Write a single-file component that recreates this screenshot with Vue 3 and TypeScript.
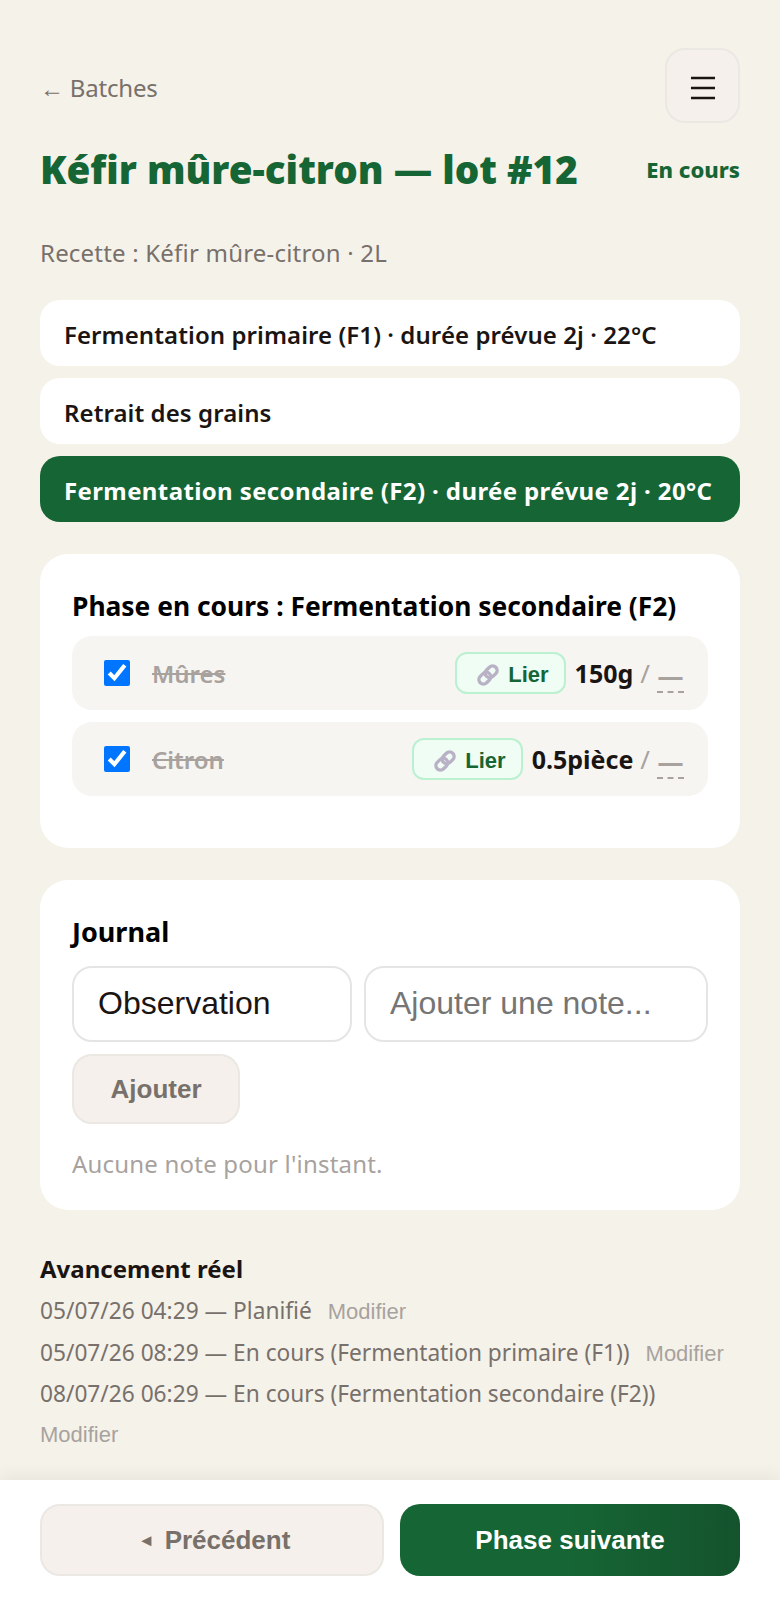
<script setup lang="ts">
import { ref } from 'vue';

const phases = [
    { label: 'Fermentation primaire (F1) · durée prévue 2j · 22°C', active: false },
    { label: 'Retrait des grains', active: false },
    { label: 'Fermentation secondaire (F2) · durée prévue 2j · 20°C', active: true },
];

const ingredients = ref([
    { name: 'Mûres', qty: '150g', done: true },
    { name: 'Citron', qty: '0.5pièce', done: true },
]);

const history = [
    '05/07/26 04:29 — Planifié',
    '05/07/26 08:29 — En cours (Fermentation primaire (F1))',
    '08/07/26 06:29 — En cours (Fermentation secondaire (F2))',
];

const note = ref('');
</script>

<template>
    <div class="page">
        <main class="content">
            <!-- Header -->
            <div class="top-row">
                <span class="back">← Batches</span>
                <button class="menu-btn" aria-label="Menu">
                    <svg class="menu-icon" viewBox="0 0 24 24" stroke="currentColor" stroke-width="2.5">
                        <path d="M0 2h24M0 12h24M0 22h24" />
                    </svg>
                </button>
            </div>
            <div class="title-row">
                <h1 class="title">Kéfir mûre-citron — lot #12</h1>
                <span class="status">En cours</span>
            </div>
            <p class="recipe">Recette : Kéfir mûre-citron · 2L</p>

            <!-- Phases -->
            <div class="phases">
                <div
                    v-for="p in phases"
                    :key="p.label"
                    class="phase"
                    :class="{ active: p.active }"
                >{{ p.label }}</div>
            </div>

            <!-- Current phase -->
            <section class="card current-card">
                <h2 class="card-title">Phase en cours : Fermentation secondaire (F2)</h2>
                <div class="ingredients">
                    <div v-for="item in ingredients" :key="item.name" class="ingredient">
                        <input v-model="item.done" type="checkbox" class="check" />
                        <span class="ing-name">{{ item.name }}</span>
                        <button class="link-btn">
                            <svg class="link-icon" viewBox="0 0 24 24" fill="none">
                                <g transform="rotate(-45 12 12)">
                                    <rect x="1" y="7.5" width="13" height="9" rx="4.5" />
                                    <rect x="10" y="7.5" width="13" height="9" rx="4.5" />
                                </g>
                            </svg>
                            Lier
                        </button>
                        <span class="qty">{{ item.qty }}</span>
                        <span class="sep">/</span>
                        <span class="actual">—</span>
                    </div>
                </div>
            </section>

            <!-- Journal -->
            <section class="card journal-card">
                <h2 class="journal-title">Journal</h2>
                <div class="journal-form">
                    <select class="field note-type">
                        <option>Observation</option>
                    </select>
                    <input v-model="note" class="field note-input" placeholder="Ajouter une note..." />
                    <button class="add-btn">Ajouter</button>
                </div>
                <p class="empty">Aucune note pour l'instant.</p>
            </section>

            <!-- History -->
            <section class="history">
                <h2 class="history-title">Avancement réel</h2>
                <div v-for="line in history" :key="line" class="history-line">
                    <span>{{ line }}</span>
                    <span class="edit">Modifier</span>
                </div>
            </section>
        </main>

        <footer class="footer">
            <button class="foot-btn prev"><span class="arrow">◂</span>Précédent</button>
            <button class="foot-btn next">Phase suivante</button>
        </footer>
    </div>
</template>

<style scoped>
.page {
    min-height: 1600px;
    display: flex;
    flex-direction: column;
    background: #f5f2ea;
    font-family: "Noto Sans", "Open Sans", sans-serif;
    color: #1a1512;
}
.content {
    flex: 1;
    padding: 48px 40px 0;
}

/* ── Header ─────────────────────────────────────────── */
.top-row {
    display: flex;
    justify-content: space-between;
    align-items: center;
    margin-bottom: 23px;
}
.back {
    margin-top: 4px;
    font-size: 24px;
    letter-spacing: -0.2px;
    color: #78706a;
}
.menu-btn {
    display: flex;
    align-items: center;
    justify-content: center;
    width: 75px;
    height: 75px;
    border: 2px solid #ebe8e4;
    border-radius: 20px;
    background: #f5f0eb;
    color: #1a1512;
    padding: 4px 0 0;
}
.menu-icon {
    width: 24px;
    height: 24px;
}
.title-row {
    display: flex;
    justify-content: space-between;
    align-items: center;
    margin-bottom: 42px;
}
.title {
    margin: 0;
    font-size: 38.6px;
    font-weight: 900;
    color: #166534;
    line-height: 46px;
}
.status {
    font-size: 22px;
    font-weight: 800;
    color: #166534;
}
.recipe {
    margin: 0 0 28px;
    font-size: 24px;
    line-height: 38px;
    letter-spacing: 0.2px;
    color: #78706a;
}

/* ── Phases ─────────────────────────────────────────── */
.phases {
    display: flex;
    flex-direction: column;
    gap: 12px;
    margin-bottom: 32px;
}
.phase {
    height: 66px;
    box-sizing: border-box;
    display: flex;
    align-items: center;
    padding: 2px 24px 0;
    border-radius: 20px;
    background: #fff;
    font-size: 24px;
    font-weight: 600;
    letter-spacing: 0.08px;
    white-space: nowrap;
}
.phase.active {
    background: #166534;
    color: #fff;
    font-weight: 700;
    letter-spacing: 0.38px;
}

/* ── Cards ──────────────────────────────────────────── */
.card {
    background: #fff;
    border-radius: 28px;
    padding: 32px;
    margin-bottom: 32px;
}
.current-card {
    height: 294px;
    padding-top: 34px;
    box-sizing: border-box;
}
.card-title {
    margin: 0 0 12px;
    font-size: 26.4px;
    font-weight: 700;
    line-height: 36px;
    color: #000;
}
.ingredients {
    display: flex;
    flex-direction: column;
    gap: 12px;
}
.ingredient {
    height: 74px;
    display: flex;
    align-items: center;
    padding: 0 24px 0 32px;
    border-radius: 20px;
    background: #f7f5f2;
}
.check {
    width: 26px;
    height: 26px;
    margin: 0 22px 0 0;
}
.ing-name {
    flex: 1;
    font-size: 24px;
    font-weight: 600;
    color: #a8a29e;
    text-decoration: line-through;
}
.link-btn {
    display: flex;
    align-items: center;
    height: 42px;
    box-sizing: border-box;
    padding: 4px 15px 0 19px;
    margin-right: 9px;
    border: 2px solid #bbf0d0;
    border-radius: 12px;
    background: #f0fdf4;
    color: #166534;
    font-family: "Liberation Sans", Arial, sans-serif;
    font-size: 22px;
    font-weight: 700;
}
.link-icon {
    width: 24px;
    height: 24px;
    margin-right: 8px;
    stroke: #b9b2c6;
    stroke-width: 3.4;
}
.qty {
    font-size: 25px;
    font-weight: 700;
}
.sep {
    margin: 0 7px;
    font-size: 26px;
    color: #a8a29e;
}
.actual {
    width: 27px;
    margin-top: 8px;
    border-bottom: 2px dashed #a8a29e;
    font-size: 26px;
    font-weight: 700;
    line-height: 29px;
    color: #a8a29e;
    text-align: center;
}

/* ── Journal ────────────────────────────────────────── */
.journal-card {
    padding-bottom: 30px;
}
.journal-title {
    margin: 0 0 14px;
    font-size: 27px;
    font-weight: 700;
    line-height: 40px;
    color: #000;
}
.journal-form {
    display: flex;
    flex-wrap: wrap;
    gap: 12px;
    margin-bottom: 24px;
}
.field {
    height: 76px;
    box-sizing: border-box;
    padding: 0 24px 2px;
    border: 2px solid #e5e5e5;
    border-radius: 20px;
    background: #fff;
    font-family: "Liberation Sans", Arial, sans-serif;
    font-size: 32px;
    color: #1a1512;
    outline: none;
}
.note-type {
    width: 280px;
    appearance: none;
}
.note-input {
    flex: 1 1 320px;
    min-width: 0;
}
.note-input::placeholder {
    color: #757575;
}
.add-btn {
    height: 70px;
    width: 168px;
    border: 2px solid #ebe8e4;
    border-radius: 20px;
    background: #f5f0eb;
    color: #78706a;
    font-family: "Liberation Sans", Arial, sans-serif;
    font-size: 26px;
    font-weight: 700;
}
.empty {
    margin: 0;
    font-size: 24px;
    line-height: 32px;
    letter-spacing: 0.2px;
    color: #a8a29e;
}

/* ── History ────────────────────────────────────────── */
.history {
    margin-top: 41px;
}
.history-title {
    margin: 0 0 4px;
    font-size: 24px;
    font-weight: 700;
    line-height: 36px;
}
.history-line {
    display: flex;
    flex-wrap: wrap;
    align-items: baseline;
    column-gap: 16px;
    font-size: 22.7px;
    line-height: 40.5px;
    color: #78706a;
}
.edit {
    font-family: "Liberation Sans", Arial, sans-serif;
    font-size: 22px;
    color: #a8a29e;
}

/* ── Footer ─────────────────────────────────────────── */
.footer {
    display: flex;
    gap: 16px;
    padding: 24px 40px;
    background: #fff;
    box-shadow: 0 -4px 16px rgba(0, 0, 0, 0.06);
}
.foot-btn {
    height: 72px;
    border-radius: 20px;
    font-family: "Liberation Sans", Arial, sans-serif;
    font-size: 26px;
    font-weight: 700;
}
.prev {
    width: 344px;
    padding-left: 14px;
    border: 2px solid #ebe8e4;
    background: #f5f0eb;
    color: #78706a;
}
.arrow {
    font-size: 18px;
    vertical-align: 3px;
    margin-right: 14px;
}
.next {
    flex: 1;
    border: none;
    background: linear-gradient(90deg, #166534 50%, #14532d);
    color: #fff;
}
</style>
